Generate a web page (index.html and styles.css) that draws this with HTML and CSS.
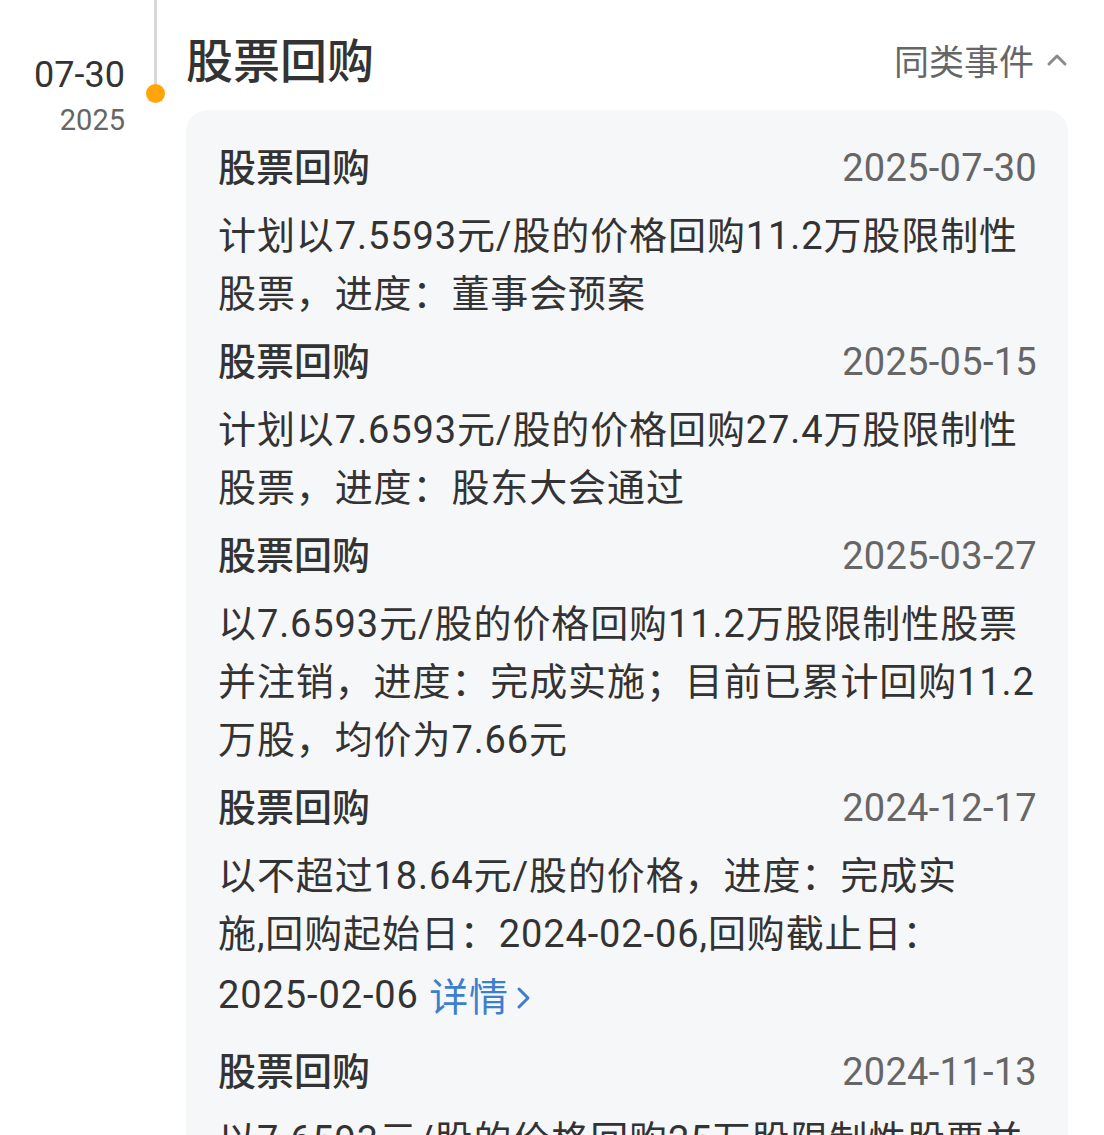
FILE: index.html
```html
<!DOCTYPE html>
<html lang="zh-CN">
<head>
    <meta charset="UTF-8">
    <meta name="viewport" content="width=device-width, initial-scale=1.0">
    <title>股票回购</title>
    <link rel="stylesheet" href="styles.css">
</head>
<body>
    <div class="event">
        <div class="event-date">
            <div class="day">07-30</div>
            <div class="year">2025</div>
        </div>
        <div class="event-axis">
            <div class="axis-line"></div>
            <div class="axis-dot"></div>
        </div>
        <div class="event-body">
            <div class="event-head">
                <h2>股票回购</h2>
                <span class="same-kind">同类事件
                    <svg width="22" height="14" viewBox="0 0 22 14"><path d="M3 11 L11 3 L19 11" fill="none" stroke="#8a8a8a" stroke-width="3" stroke-linecap="round" stroke-linejoin="round"/></svg>
                </span>
            </div>
            <div class="card">
                <div class="item">
                    <div class="item-head">
                        <span class="item-title">股票回购</span>
                        <span class="item-date">2025-07-30</span>
                    </div>
                    <p>计划以7.5593元/股的价格回购11.2万股限制性<br>股票，进度：董事会预案</p>
                </div>
                <div class="item">
                    <div class="item-head">
                        <span class="item-title">股票回购</span>
                        <span class="item-date">2025-05-15</span>
                    </div>
                    <p>计划以7.6593元/股的价格回购27.4万股限制性<br>股票，进度：股东大会通过</p>
                </div>
                <div class="item">
                    <div class="item-head">
                        <span class="item-title">股票回购</span>
                        <span class="item-date">2025-03-27</span>
                    </div>
                    <p>以7.6593元/股的价格回购11.2万股限制性股票<br>并注销，进度：完成实施；目前已累计回购11.2<br>万股，均价为7.66元</p>
                </div>
                <div class="item">
                    <div class="item-head">
                        <span class="item-title">股票回购</span>
                        <span class="item-date">2024-12-17</span>
                    </div>
                    <p>以不超过18.64元/股的价格，进度：完成实<br>施,回购起始日：2024-02-06,回购截止日：<br>2025-02-06 <a class="more" href="#">详情<svg width="18" height="30" viewBox="0 0 18 30"><path d="M4 6 L13 15 L4 24" fill="none" stroke="#3d7fcc" stroke-width="3" stroke-linecap="round" stroke-linejoin="round"/></svg></a></p>
                </div>
                <div class="item">
                    <div class="item-head">
                        <span class="item-title">股票回购</span>
                        <span class="item-date">2024-11-13</span>
                    </div>
                    <p>以7.6593元/股的价格回购25万股限制性股票并<br>注销，进度：完成实施</p>
                </div>
            </div>
        </div>
    </div>
</body>
</html>
```

FILE: styles.css
```css
* {
    box-sizing: border-box;
}

body {
    margin: 0;
    background-color: #fff;
    color: #333;
    font-family: Roboto, "Noto Sans CJK SC", sans-serif;
}

.event {
    display: grid;
    grid-template-columns: 140px 30px 1fr;
    padding-right: 36px;
}

.event-date {
    text-align: right;
    padding-right: 15px;
    padding-top: 52px;
}

.event-date .day {
    font-size: 36px;
    line-height: 46px;
    color: #333;
}

.event-date .year {
    font-size: 29px;
    line-height: 44px;
    color: #666;
}

.event-axis {
    display: flex;
    flex-direction: column;
    align-items: center;
}

.axis-line {
    width: 3px;
    height: 86px;
    background-color: #d9d9d9;
}

.axis-dot {
    width: 19px;
    height: 19px;
    margin-top: -2px;
    border-radius: 50%;
    background-color: #ffa50a;
}

.event-body {
    margin-left: 16px;
}

.event-head {
    display: flex;
    justify-content: space-between;
    align-items: center;
    height: 100px;
    padding-top: 15px;
    margin-bottom: 10px;
}

.event-head h2 {
    margin: 0;
    font-size: 47px;
    font-weight: 500;
    color: #333;
}

.same-kind {
    display: flex;
    align-items: center;
    gap: 12px;
    padding-top: 4px;
    font-size: 35px;
    color: #666;
}

.card {
    background-color: #f6f7f9;
    border-radius: 22px;
    padding: 29px 31px 20px 32px;
}

.item + .item {
    margin-top: 10px;
}

.item-head {
    display: flex;
    justify-content: space-between;
    align-items: baseline;
    line-height: 58px;
}

.item-title {
    font-size: 38px;
    font-weight: 500;
    color: #333;
}

.item-date {
    font-size: 38px;
    letter-spacing: 0.3px;
    color: #666;
}

.item p {
    margin: 10px 0 0;
    font-size: 38px;
    line-height: 58px;
    letter-spacing: 0.9px;
    color: #333;
}

.more {
    display: inline-flex;
    align-items: center;
    height: 70px;
    vertical-align: middle;
    font-size: 39px;
    color: #3d7fcc;
    text-decoration: none;
}

.more svg {
    margin-left: 6px;
}
```
